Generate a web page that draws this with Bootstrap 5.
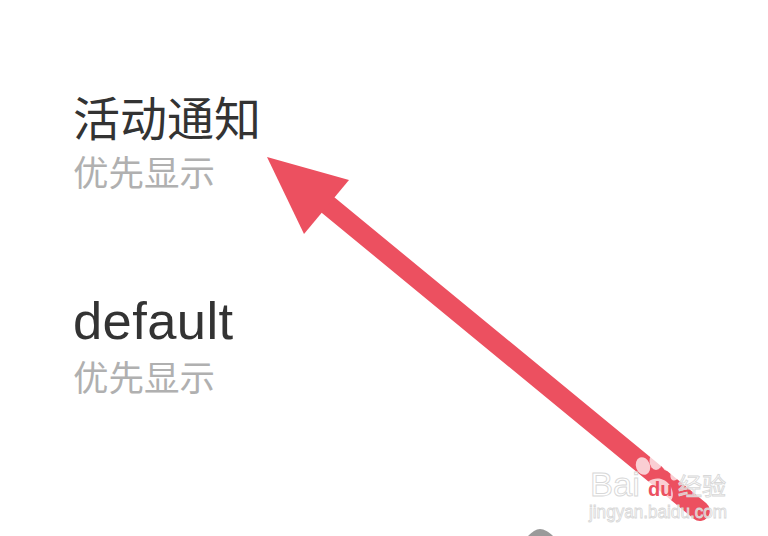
<!DOCTYPE html>
<html lang="zh">
<head>
<meta charset="utf-8">
<title>活动通知</title>
<link href="https://cdn.jsdelivr.net/npm/bootstrap@5.3.0/dist/css/bootstrap.min.css" rel="stylesheet">
<style>
html,body{height:536px;overflow:hidden;background:#fff}
body{position:relative;font-family:"Liberation Sans","Noto Sans CJK SC",sans-serif}
.setting-list{padding:90px 0 0 73px}
.setting-item{height:203px}
.setting-title{font-size:47px;line-height:59px;color:#333;font-weight:400}
.setting-title-latin{font-size:52.5px;line-height:55px;letter-spacing:.4px}
.setting-sub{font-size:35.5px;line-height:50px;color:#b0b0b0}
.setting-sub-low{margin-top:6px}
.overlay-art{position:absolute;left:0;top:0;width:768px;height:536px}
.wm{font-family:"Liberation Sans",sans-serif;fill:#fff;fill-opacity:.6;stroke:#d8d8d8;stroke-width:.9}
.wm-cjk{font-family:"Noto Sans CJK SC",sans-serif}
</style>
</head>
<body>
<div class="setting-list d-flex flex-column">
  <div class="setting-item">
    <div class="setting-title">活动通知</div>
    <div class="setting-sub">优先显示</div>
  </div>
  <div class="setting-item">
    <div class="setting-title setting-title-latin">default</div>
    <div class="setting-sub setting-sub-low">优先显示</div>
  </div>
</div>
<svg class="overlay-art" viewBox="0 0 768 536" aria-hidden="true">
  <line x1="700" y1="511" x2="328" y2="205" stroke="#ec5060" stroke-width="20" stroke-linecap="round"/>
  <polygon points="267,157 349,180 304,234" fill="#ec5060"/>
  <path d="M528 536c4-4 8-7 12-7s9 3 13 7z" fill="#9a9a9a"/>
  <g fill="#fff" fill-opacity=".72">
    <ellipse cx="643" cy="466" rx="7" ry="9" transform="rotate(-20 643 466)"/>
    <ellipse cx="656" cy="461" rx="6.5" ry="9"/>
    <ellipse cx="668" cy="462" rx="6" ry="9" transform="rotate(10 668 462)"/>
    <ellipse cx="676" cy="473" rx="5" ry="8" transform="rotate(25 676 473)"/>
    <path d="M644 488c3-11 20-14 27-1 4 9 1 14-3 15h-20c-5-2-6-8-4-14z"/>
  </g>
  <text class="wm" x="590" y="496" font-size="33" textLength="50" lengthAdjust="spacingAndGlyphs">Bai</text>
  <text x="648" y="496" font-size="20" font-weight="700" fill="#ec5060" font-family="Liberation Sans, sans-serif">du</text>
  <text class="wm wm-cjk" x="678" y="495" font-size="24">经验</text>
  <text class="wm" x="589" y="518" font-size="19" textLength="138" lengthAdjust="spacingAndGlyphs">jingyan.baidu.com</text>
</svg>
<script src="https://cdn.jsdelivr.net/npm/bootstrap@5.3.0/dist/js/bootstrap.bundle.min.js"></script>
</body>
</html>
